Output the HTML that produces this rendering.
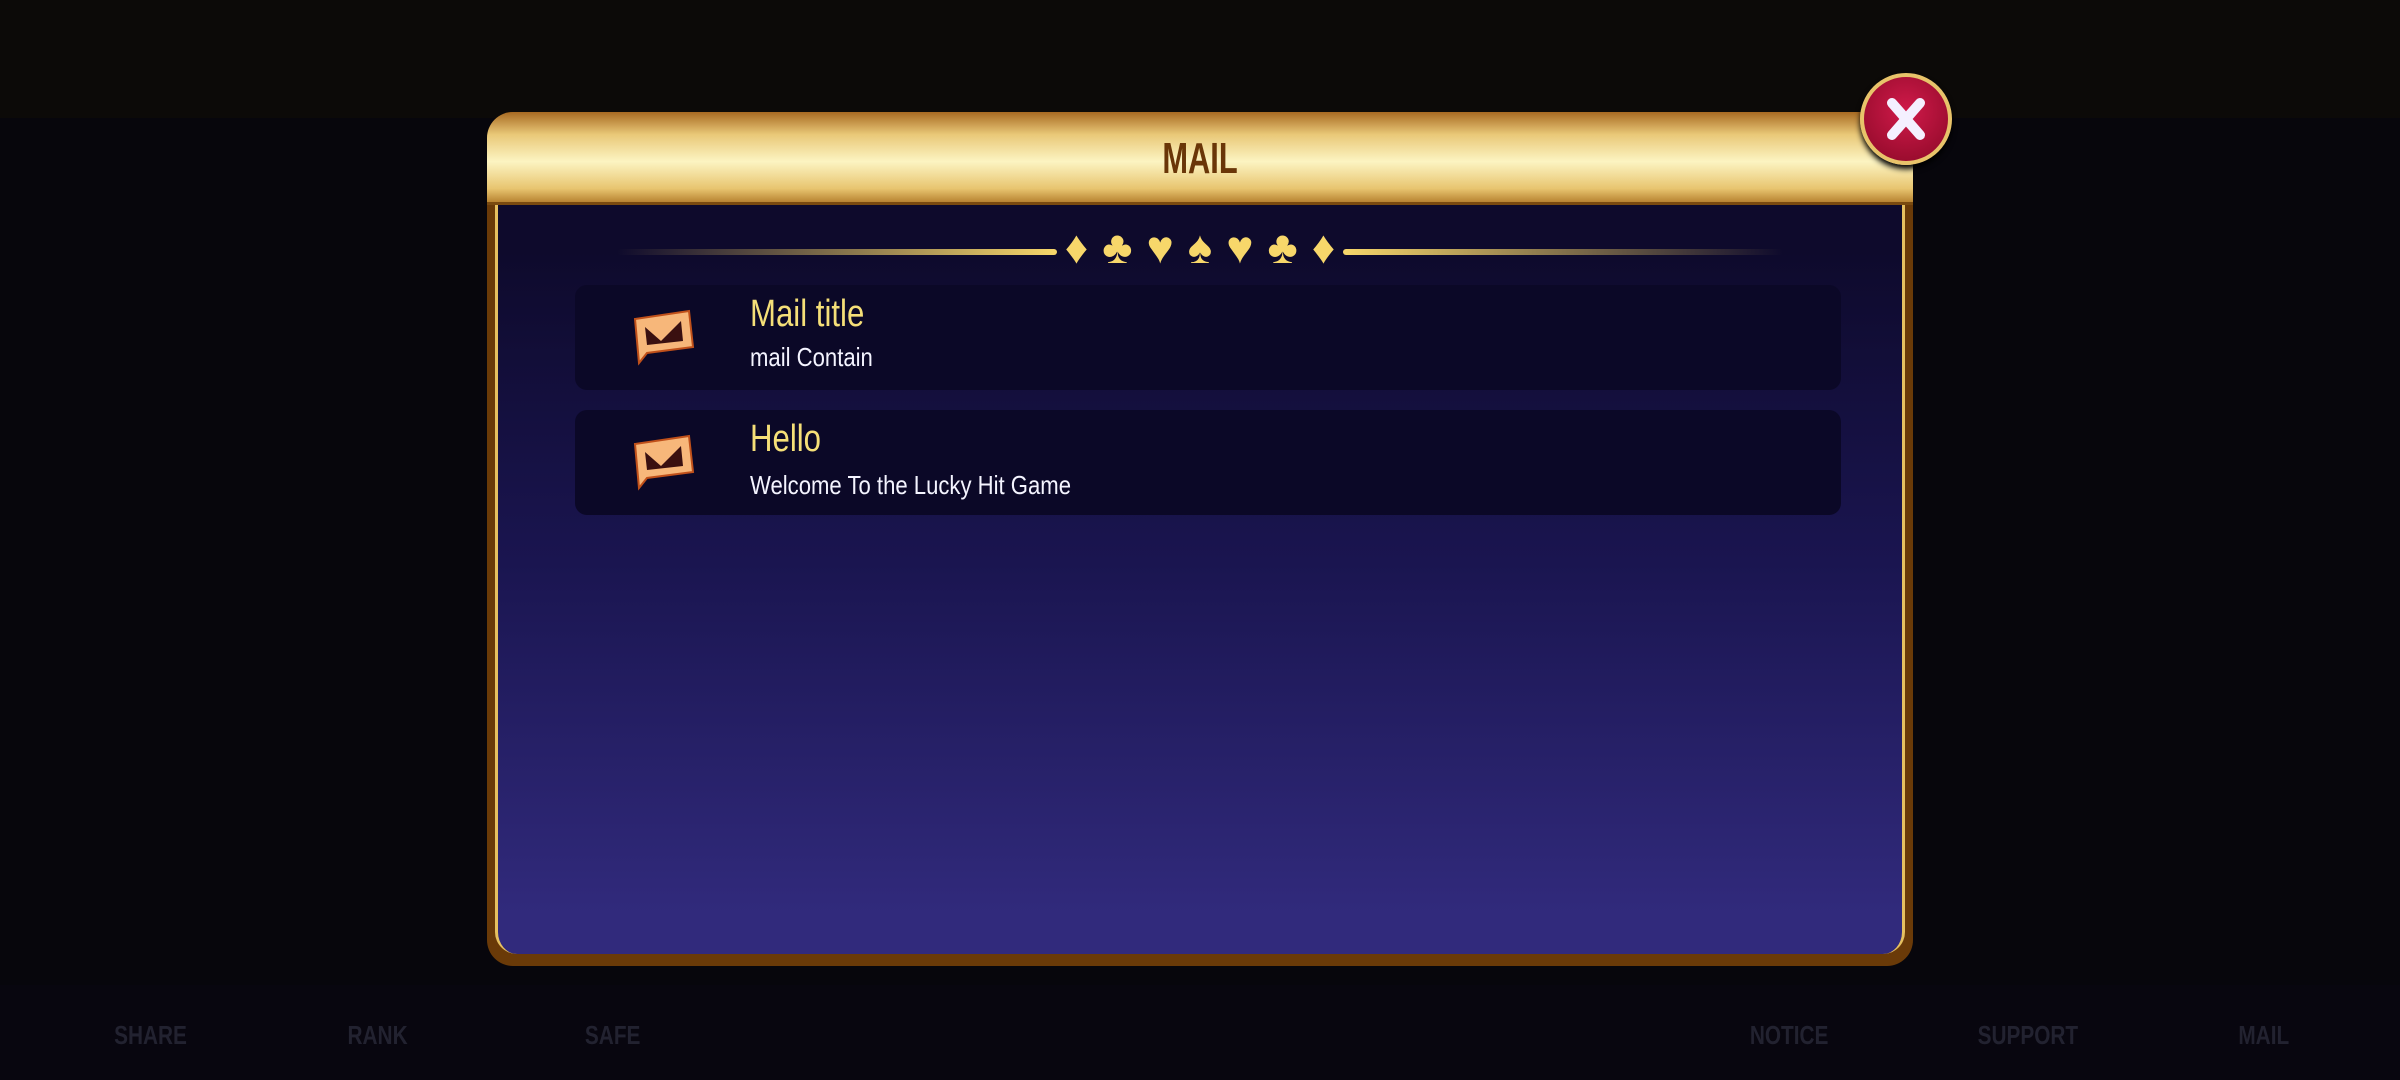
<!DOCTYPE html>
<html><head><meta charset="utf-8">
<style>
*{margin:0;padding:0;box-sizing:border-box}
body{width:2400px;height:1080px;overflow:hidden;background:#07060c;font-family:"Liberation Sans",sans-serif;position:relative}
.top{position:absolute;left:0;top:0;width:2400px;height:118px;background:#0c0a08}
.bot{position:absolute;left:0;top:985px;width:2400px;height:95px;background:#08060f}
.lbl{position:absolute;top:1020px;color:#222230;font-weight:bold;font-size:26px;transform:scaleX(.8)}
.panel{position:absolute;left:487px;top:112px;width:1426px;height:854px;border-radius:26px;background:#6a3a08;}
.inner{position:absolute;left:8px;top:60px;right:8px;bottom:12px;border-radius:0 0 22px 22px;background:linear-gradient(#0e0a2c 10%,#1a1550 50%,#312a7c 95%);border-left:3px solid #e6c060;border-right:3px solid #e6c060}
.head{position:absolute;left:0;top:0;width:1426px;height:93px;border-radius:26px 26px 0 0;background:linear-gradient(#a86a22 0%,#e9c878 25%,#fcf4c2 55%,#e8c570 85%,#b88432 100%);border-bottom:3px solid #7a4a10}
.head span{position:absolute;left:0;right:0;top:22px;text-align:center;font-weight:bold;font-size:44px;color:#6a3608;transform:scaleX(.7)}
.close{position:absolute;left:1860px;top:73px;width:92px;height:92px;border-radius:50%;background:radial-gradient(circle at 50% 40%,#d01a4a,#8a0826);border:4px solid #e8c36a;box-shadow:0 4px 6px #000}
.line{position:absolute;top:249px;height:6px;border-radius:3px}
.card{position:absolute;left:575px;width:1266px;height:105px;border-radius:12px;background:#0b0827}
.t{position:absolute;left:175px;font-size:38px;color:#f5df78;transform:scaleX(.82);transform-origin:left;white-space:nowrap}
.s{position:absolute;left:175px;font-size:26px;color:#f4f4ff;transform:scaleX(.85);transform-origin:left;white-space:nowrap}
.ic{position:absolute;left:56px;top:22px}
.suit{position:absolute;top:220px;left:1000px;width:400px;text-align:center;color:#f7d76a;font-size:46px;letter-spacing:14px;text-indent:14px;white-space:nowrap}
</style></head><body>
<div class="top"></div>
<div class="bot"></div>
<div class="lbl" style="left:105px">SHARE</div>
<div class="lbl" style="left:340px">RANK</div>
<div class="lbl" style="left:578px">SAFE</div>
<div class="lbl" style="left:1740px">NOTICE</div>
<div class="lbl" style="left:1965px">SUPPORT</div>
<div class="lbl" style="left:2232px">MAIL</div>
<div class="panel">
 <div class="inner"></div>
 <div class="head"><span>MAIL</span></div>
</div>
<div class="close"><svg width="84" height="84" viewBox="0 0 84 84"><path d="M28 26 L56 58 M56 26 L28 58" stroke="#f4f0ff" stroke-width="10" stroke-linecap="round"/></svg></div>
<div class="line" style="left:617px;width:440px;background:linear-gradient(90deg,rgba(247,215,106,0),#f7d76a)"></div>
<div class="line" style="left:1343px;width:440px;background:linear-gradient(90deg,#f7d76a,rgba(247,215,106,0))"></div>
<div class="suit">♦♣♥♠♥♣♦</div>
<div class="card" style="top:285px">
 <svg class="ic" width="64" height="60" viewBox="0 0 64 60"><path d="M4 12 L58 4 L62 40 L16 46 L8 56 Z" fill="#f7b77a" stroke="#c0501a" stroke-width="2"/><path d="M14 20 L30 34 L50 14 L52 34 L16 38 Z" fill="#3a1010"/></svg>
 <div class="t" style="top:8px">Mail title</div>
 <div class="s" style="top:57px">mail Contain</div>
</div>
<div class="card" style="top:410px">
 <svg class="ic" width="64" height="60" viewBox="0 0 64 60"><path d="M4 12 L58 4 L62 40 L16 46 L8 56 Z" fill="#f7b77a" stroke="#c0501a" stroke-width="2"/><path d="M14 20 L30 34 L50 14 L52 34 L16 38 Z" fill="#3a1010"/></svg>
 <div class="t" style="top:8px">Hello</div>
 <div class="s" style="top:60px">Welcome To the Lucky Hit Game</div>
</div>
</body></html>
